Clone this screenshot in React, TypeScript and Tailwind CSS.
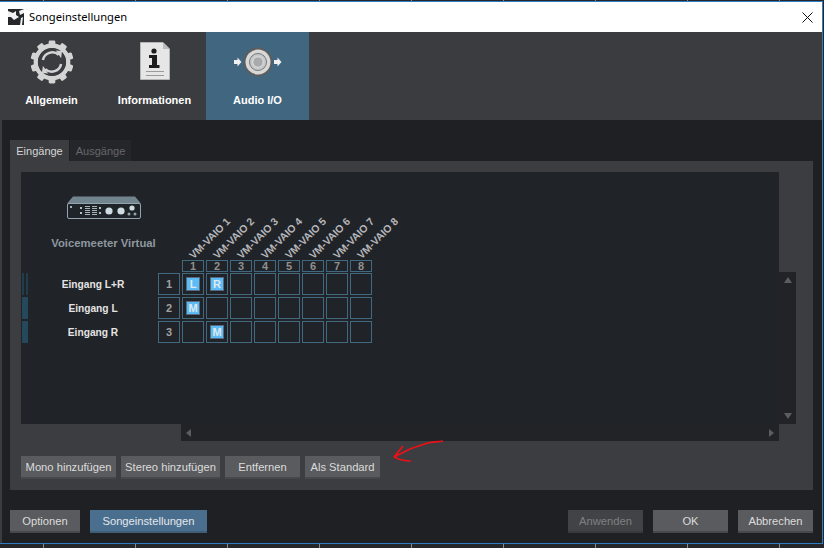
const CHANNELS = [1, 2, 3, 4, 5, 6, 7, 8];
const TICKS = [0, 1, 2, 3, 4, 5, 6, 7, 8];
const TEETH = [0, 36, 72, 108, 144, 180, 216, 252, 288, 324];

const ROWS = [
  { name: "Eingang L+R", index: 1, split: true, cells: { 1: "L", 2: "R" } as Record<number, string> },
  { name: "Eingang L", index: 2, split: false, cells: { 1: "M" } as Record<number, string> },
  { name: "Eingang R", index: 3, split: false, cells: { 2: "M" } as Record<number, string> },
];

function TickStrip({ className }: { className: string }) {
  return (
    <div className={`flex gap-[91px] bg-[#26272a] pl-[43px] ${className}`}>
      {TICKS.map((t) => (
        <span key={t} className="h-full w-px bg-[#8a8b8d]" />
      ))}
    </div>
  );
}

function AppIcon() {
  return (
    <svg width="16" height="16" viewBox="0 0 16 16" className="shrink-0">
      <rect width="16" height="16" fill="#26272a" />
      <path d="M0 2 L5 4 L8 2 L8 6 L11 8 L6 11 L3 8 L0 8 Z" fill="#f2f2f2" />
      <path d="M11 2 L16 0 L16 4 L12 6 Z" fill="#f2f2f2" />
      <path d="M13 9 L15 8 L14 16 L12 16 Z" fill="#f2f2f2" />
    </svg>
  );
}

function GearIcon() {
  return (
    <svg width="44" height="44" viewBox="0 0 46 46">
      {TEETH.map((deg) => (
        <rect key={deg} x="19.5" y="0.5" width="7" height="7" rx="1.5" fill="#d4d4d4" transform={`rotate(${deg} 23 23)`} />
      ))}
      <circle cx="23" cy="23" r="17" fill="none" stroke="#d4d4d4" strokeWidth="4.5" />
      <circle cx="23" cy="23" r="14.5" fill="#3b3c40" />
      <path d="M13.5 21 A10 10 0 0 1 30 15.5" fill="none" stroke="#d4d4d4" strokeWidth="2.6" />
      <path d="M32.5 25 A10 10 0 0 1 16 30.5" fill="none" stroke="#d4d4d4" strokeWidth="2.6" />
      <path d="M27 11 L33.5 11.5 L32.5 19 Z" fill="#d4d4d4" />
      <path d="M19 35 L12.5 34.5 L13.5 27 Z" fill="#d4d4d4" />
    </svg>
  );
}

function InfoIcon() {
  return (
    <svg width="30" height="38" viewBox="0 0 30 38">
      <path d="M0.5 0.5 H23 L29.5 7 V37.5 H0.5 Z" fill="#e6e6e6" stroke="#b5b5b5" />
      <path d="M23 0.5 V7 H29.5 Z" fill="#bdbdbd" />
      <circle cx="14" cy="9" r="2.6" fill="#1d1d1d" />
      <path d="M9 13 H17 V23 H19.5 V26 H9 V23 H12 V16 H9 Z" fill="#1d1d1d" />
      <rect x="6" y="29" width="18" height="1" fill="#9a9a9a" />
      <rect x="6" y="33" width="18" height="1" fill="#9a9a9a" />
    </svg>
  );
}

function SpeakerIcon() {
  return (
    <svg width="50" height="30" viewBox="0 0 50 30">
      <path d="M1 13 H4.5 V10.5 L8.5 15 L4.5 19.5 V17 H1 Z" fill="#f0f0f0" />
      <path d="M41 13 H44.5 V10.5 L48.5 15 L44.5 19.5 V17 H41 Z" fill="#f0f0f0" />
      <circle cx="25" cy="15" r="14.5" fill="#5c5d5f" />
      <circle cx="25" cy="15" r="12.5" fill="#d8d8d8" />
      <circle cx="25" cy="15" r="8.5" fill="#c8c9ca" stroke="#77787a" strokeWidth="1" />
      <circle cx="25" cy="15" r="5.2" fill="#a8aaac" stroke="#e6e6e6" strokeWidth="0.8" />
    </svg>
  );
}

function DeviceIcon() {
  return (
    <svg width="74" height="23" viewBox="0 0 74 23">
      <path d="M6 0.5 H68 L73.5 7 V8 H0.5 V7 Z" fill="#72858f" />
      <rect x="0.5" y="7.5" width="73" height="15" rx="1.5" fill="#1f2428" stroke="#94a4ae" />
      <rect x="3" y="10" width="2" height="2" fill="#a2b2bc" />
      <rect x="13" y="11" width="2" height="2" fill="#b4c0c8" />
      <rect x="13" y="16" width="2" height="2" fill="#b4c0c8" />
      <path d="M18 10.5 H23 M18 12.5 H23 M18 14.5 H23 M18 16.5 H23 M18 18.5 H23" stroke="#a8b4bc" />
      <path d="M25 10.5 H30 M25 12.5 H30 M25 14.5 H30 M25 16.5 H30 M25 18.5 H30" stroke="#a8b4bc" />
      <rect x="32" y="11" width="2" height="2" fill="#b4c0c8" />
      <rect x="32" y="16" width="2" height="2" fill="#b4c0c8" />
      <circle cx="42" cy="15" r="3.6" fill="#cfdce4" />
      <circle cx="54" cy="15" r="3.6" fill="#cfdce4" />
      <circle cx="65" cy="12" r="2.6" fill="#cfdce4" />
      <circle cx="62" cy="18" r="1.5" fill="#94a4ae" />
      <circle cx="68" cy="18" r="1.5" fill="#94a4ae" />
    </svg>
  );
}

function HeaderTab({ label, active, children }: { label: string; active?: boolean; children: React.ReactNode }) {
  return (
    <div className={`flex w-[103px] flex-col items-center ${active ? "bg-[#41667f]" : ""}`}>
      <div className="flex h-[58px] items-end justify-center">{children}</div>
      <span className="mt-[2px] text-[11px] leading-[17px] font-bold text-white">{label}</span>
    </div>
  );
}

function ActionButton({ label, className }: { label: string; className: string }) {
  return (
    <button className={`flex h-[23px] items-center justify-center border-b-2 border-[#47484b] bg-[#5a5b5e] pt-[2px] text-[11.2px] text-[#dcdcdc] ${className}`}>
      {label}
    </button>
  );
}

function Triangle({ points }: { points: string }) {
  return (
    <svg width="10" height="10" viewBox="0 0 10 10">
      <polygon points={points} fill="#5c5d64" />
    </svg>
  );
}

export default function App() {
  return (
    <div className="flex h-[548px] w-[824px] flex-col overflow-hidden bg-[#26272a] font-['Liberation_Sans',Arial,sans-serif]">
      <TickStrip className="h-px" />
      <div className="h-px w-[823px] bg-[#2b7cc0]" />

      <div className="flex w-[823px] flex-1 flex-col border-r border-[#2b7cc0] bg-[#1f2024]">
        <div className="flex h-[30px] items-center bg-white pr-[8px] pl-[8px]">
          <AppIcon />
          <span className="ml-[5px] flex-1 font-['Noto_Sans',sans-serif] text-[11.2px] text-black">Songeinstellungen</span>
          <svg width="11" height="11" viewBox="0 0 11 11" className="mr-[1px]">
            <path d="M0.5 0.5 L10.5 10.5 M10.5 0.5 L0.5 10.5" stroke="#111" strokeWidth="1" />
          </svg>
        </div>

        <div className="flex h-[88px] bg-[#3b3c40]">
          <HeaderTab label="Allgemein">
            <div className="mb-[6px]">
              <GearIcon />
            </div>
          </HeaderTab>
          <HeaderTab label="Informationen">
            <div className="mb-[10px]">
              <InfoIcon />
            </div>
          </HeaderTab>
          <HeaderTab label="Audio I/O" active>
            <div className="mb-[13px]">
              <SpeakerIcon />
            </div>
          </HeaderTab>
        </div>

        <div className="flex flex-1 flex-col border-l-2 border-[#3b3c40] pt-[20px] pr-[9px] pl-[8px]">
          <div className="flex h-[21px] gap-px text-[11px]">
            <div className="flex w-[59px] items-center justify-center bg-[#3c3d41] pt-px text-[#d5d5d5]">Eingänge</div>
            <div className="flex w-[61px] items-center justify-center bg-[#25262a] pt-px text-[#66676a]">Ausgänge</div>
          </div>

          <div className="h-[329px] bg-[#3c3d41] p-[11px]">
            <div className="flex items-end">
              <div className="h-[252px] w-[758px] bg-[#202327]">
                <div className="flex h-[88px]">
                  <div className="flex w-[165px] flex-col items-center pt-[24px]">
                    <DeviceIcon />
                    <span className="mt-[18px] text-[11.3px] leading-[13px] font-bold text-[#8e979f]">Voicemeeter Virtual</span>
                  </div>
                  <div className="ml-[-4px] flex gap-[2px]">
                    {CHANNELS.map((ch) => (
                      <div key={ch} className="relative w-[22px]">
                        <span className="absolute bottom-[-1px] left-[13px] origin-bottom-left -rotate-45 text-[10.5px] leading-[12px] font-bold whitespace-nowrap text-[#b4b6b9]">
                          VM-VAIO {ch}
                        </span>
                      </div>
                    ))}
                  </div>
                </div>

                <div className="mb-px ml-[161px] flex h-[12px] gap-[2px]">
                  {CHANNELS.map((ch) => (
                    <div key={ch} className="flex w-[22px] items-center justify-center border border-[#40687f] text-[11px] font-bold text-[#8f9092]">
                      {ch}
                    </div>
                  ))}
                </div>

                <div className="flex flex-col gap-[2px]">
                  {ROWS.map((row) => (
                    <div key={row.index} className="flex h-[22px]">
                      <div className="ml-px flex w-[6px] justify-between">
                        {row.split ? (
                          <>
                            <span className="w-[2px] bg-[#1f3d4d]" />
                            <span className="w-[2px] bg-[#1f3d4d]" />
                          </>
                        ) : (
                          <span className="w-[6px] bg-[#24485c]" />
                        )}
                      </div>
                      <div className="flex w-[130px] items-center justify-center pt-px text-[10.2px] font-bold text-[#e4e4e4]">{row.name}</div>
                      <div className="flex w-[22px] items-center justify-center border border-[#40687f] text-[11px] font-bold text-[#a0a1a3]">
                        {row.index}
                      </div>
                      <div className="ml-[2px] flex gap-[2px]">
                        {CHANNELS.map((ch) => (
                          <div key={ch} className="flex w-[22px] items-center justify-center border border-[#40687f]">
                            {row.cells[ch] ? (
                              <span className="flex h-[14px] w-[14px] items-center justify-center border border-[#55697a] bg-[#5cbcf5] text-[11px] font-bold text-[#dfe9ef]">
                                {row.cells[ch]}
                              </span>
                            ) : null}
                          </div>
                        ))}
                      </div>
                    </div>
                  ))}
                </div>
              </div>

              <div className="flex h-[152px] w-[17px] flex-col items-center justify-between bg-[#222327] py-[3px]">
                <Triangle points="1,8 9,8 5,2" />
                <Triangle points="1,2 9,2 5,8" />
              </div>
            </div>

            <div className="ml-[160px] flex h-[17px] w-[598px] items-center justify-between bg-[#222327] px-[3px]">
              <Triangle points="7,1 7,9 2,5" />
              <Triangle points="3,1 3,9 8,5" />
            </div>

            <div className="relative mt-[15px] flex gap-[5px]">
              <ActionButton label="Mono hinzufügen" className="w-[95px]" />
              <ActionButton label="Stereo hinzufügen" className="w-[99px]" />
              <ActionButton label="Entfernen" className="w-[75px]" />
              <ActionButton label="Als Standard" className="w-[75px]" />
              <svg width="54" height="26" viewBox="0 0 54 26" className="absolute top-[-16px] left-[369px]">
                <path
                  d="M4 17 C10 14 14 12 20 9 C28 6 32 5 38 3 C42 2 46 2 53 1 M4 17 L13 6 M4 17 C10 20 15 21 21 21"
                  fill="none"
                  stroke="#ee1016"
                  strokeWidth="1.7"
                />
              </svg>
            </div>
          </div>

          <div className="mt-[20px] flex">
            <ActionButton label="Optionen" className="w-[70px]" />
            <button className="ml-[10px] flex h-[23px] w-[117px] items-center justify-center border-b-2 border-[#3f5f79] bg-[#4a6f8e] pt-[2px] text-[11.2px] text-[#e2e6ea]">
              Songeinstellungen
            </button>
            <button className="ml-auto flex h-[23px] w-[75px] items-center justify-center border-b-2 border-[#38393c] bg-[#424346] pt-[2px] text-[11.2px] text-[#7f8083]">
              Anwenden
            </button>
            <ActionButton label="OK" className="ml-[10px] w-[75px]" />
            <ActionButton label="Abbrechen" className="ml-[10px] w-[75px]" />
          </div>
        </div>
      </div>

      <div className="h-px w-[823px] bg-[#2b7cc0]" />
      <TickStrip className="h-[4px]" />
    </div>
  );
}
